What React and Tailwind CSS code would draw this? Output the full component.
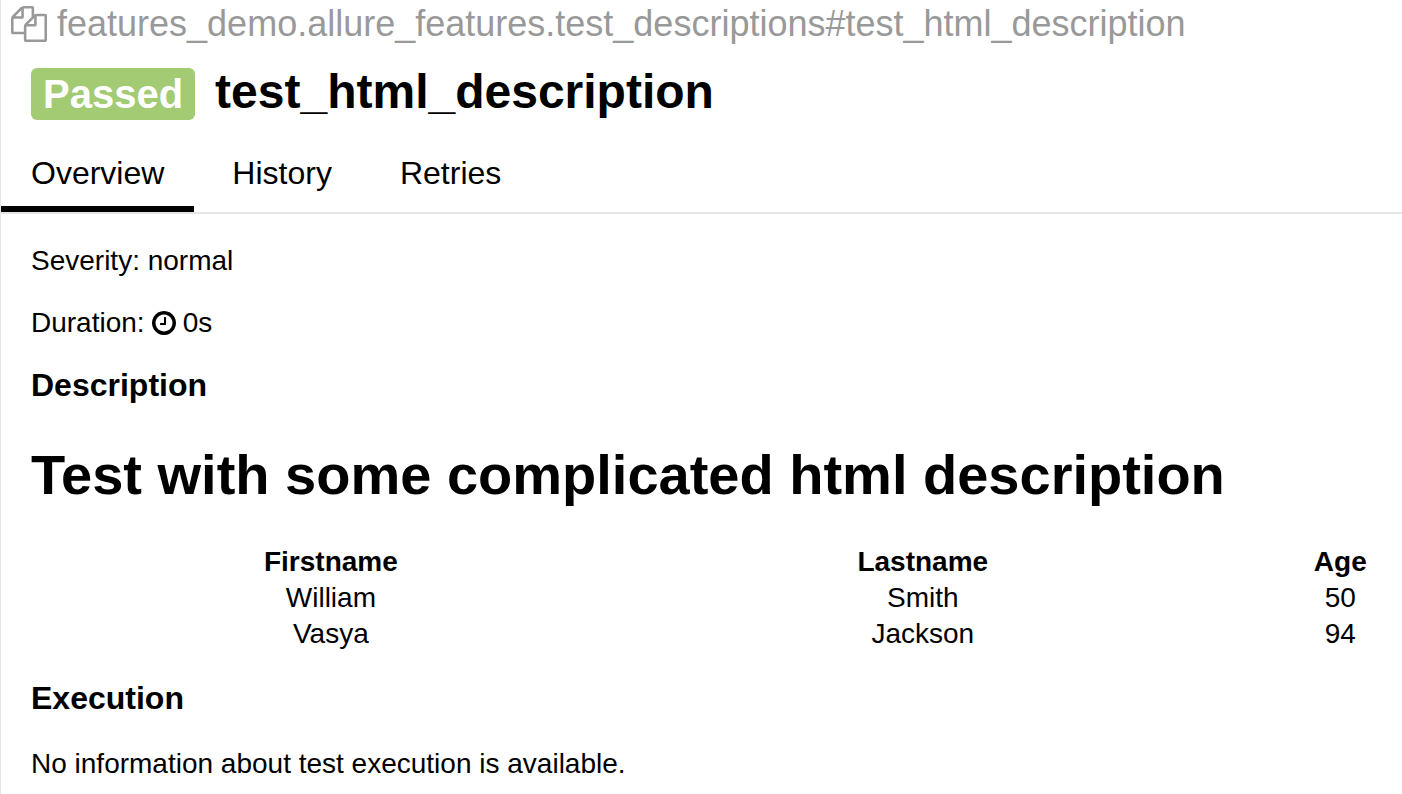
const people = [
  { first: "William", last: "Smith", age: 50 },
  { first: "Vasya", last: "Jackson", age: 94 },
];

function CopyIcon() {
  return (
    <svg viewBox="0 0 1792 1792" className="size-9 shrink-0" fill="currentColor" aria-hidden="true">
      <path d="M1696 384q40 0 68 28t28 68v1216q0 40-28 68t-68 28h-960q-40 0-68-28t-28-68v-288h-544q-40 0-68-28t-28-68v-672q0-40 20-88t48-76l408-408q28-28 76-48t88-20h416q40 0 68 28t28 68v328q68-40 128-40h416zm-544 213l-299 299h299v-299zm-640-384l-299 299h299v-299zm196 647l316-316v-416h-384v416q0 40-28 68t-68 28h-416v640h512v-256q0-40 20-88t48-76zm956 804v-1152h-384v416q0 40-28 68t-68 28h-416v640h896z" />
    </svg>
  );
}

function ClockIcon() {
  return (
    <svg viewBox="0 0 1536 1536" className="size-6 shrink-0" fill="currentColor" aria-hidden="true">
      <path d="M896 416v448q0 14-9 23t-23 9h-320q-14 0-23-9t-9-23v-64q0-14 9-23t23-9h224v-352q0-14 9-23t23-9h64q14 0 23 9t9 23zm416 352q0-148-73-273t-198-198-273-73-273 73-198 198-73 273 73 273 198 198 273 73 273-73 198-198 73-273zm224 0q0 209-103 385.500t-279.500 279.500-385.500 103-385.500-103-279.500-279.500-103-385.500 103-385.500 279.500-279.500 385.500-103 385.500 103 279.500 279.500 103 385.500z" />
    </svg>
  );
}

export default function App() {
  return (
    <main className="min-h-screen overflow-x-hidden border-l border-[#e5e5e5] bg-white font-['Liberation_Sans',Arial,sans-serif] text-[28px] leading-9 text-black">
      <div className="flex h-12 items-center gap-2.5 pl-2.5 text-[36px] text-[#999]">
        <button type="button" aria-label="Copy name"><CopyIcon /></button>
        <span>features_demo.allure_features.test_descriptions#test_html_description</span>
      </div>
      <header className="mt-5 flex items-baseline gap-5 px-[30px]">
        <span className="flex h-[52px] items-center rounded-md bg-[#a2cb73] px-3 text-[40px] font-bold text-white">Passed</span>
        <h1 className="text-[48px] font-bold">test_html_description</h1>
      </header>
      <nav className="mt-6 flex h-[70px] border-b-2 border-[#e5e5e5] text-[32px]">
        <a href="#overview" aria-current="page" className="h-[68px] border-b-6 border-black px-[30px] pt-[11px]">Overview</a>
        <a href="#history" className="px-[38px] pt-[11px]">History</a>
        <a href="#retries" className="px-[30px] pt-[11px]">Retries</a>
      </nav>
      <div className="px-[30px] pt-[29px]">
        <p>Severity: normal</p>
        <p className="mt-[26px] flex items-center gap-[7px]">Duration: <ClockIcon /> 0s</p>
        <h2 className="mt-[26px] text-[32px] font-bold">Description</h2>
        <h1 className="mt-[38px] text-[56px] font-bold leading-[68px]">Test with some complicated html description</h1>
        <table className="mt-[35px] w-[107%] table-fixed text-center">
          <thead>
            <tr>
              <th className="w-[41.8%]">Firstname</th>
              <th className="w-[40.7%]">Lastname</th>
              <th className="w-[17.5%]">Age</th>
            </tr>
          </thead>
          <tbody>
            {people.map((p) => (
              <tr key={p.first}>
                <td>{p.first}</td>
                <td>{p.last}</td>
                <td>{p.age}</td>
              </tr>
            ))}
          </tbody>
        </table>
        <h2 className="mt-7 text-[32px] font-bold">Execution</h2>
        <p className="mt-[30px]">No information about test execution is available.</p>
      </div>
    </main>
  );
}
